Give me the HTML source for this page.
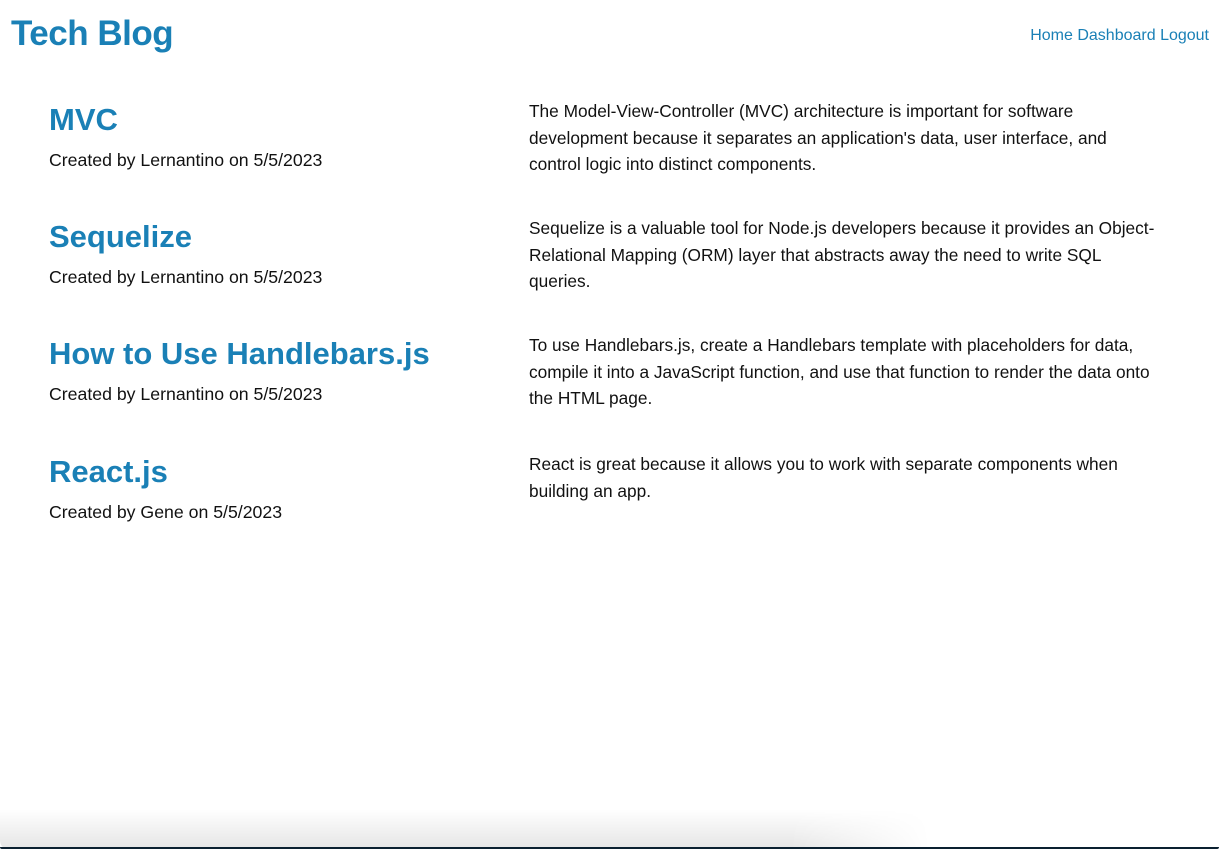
<!DOCTYPE html>
<html><head><style>
body{margin:0;width:1219px;height:849px;background:#fff;font-family:"Liberation Sans",sans-serif;position:relative;overflow:hidden;color:#111}
.logo{position:absolute;left:11px;top:14px;font-size:35px;font-weight:bold;color:#1a80b6;letter-spacing:-0.5px}
.nav{position:absolute;right:10px;top:27px;font-size:16px;color:#1a80b6}
.t{position:absolute;left:49px;font-size:31px;font-weight:bold;color:#1a80b6;line-height:36px}
.d{position:absolute;left:49px;font-size:17.7px;line-height:22px}
.b{position:absolute;left:529px;width:680px;font-size:17.3px;line-height:26.5px;white-space:nowrap}
.shadow{position:absolute;left:0;bottom:0;width:930px;height:40px;background:linear-gradient(to bottom,rgba(0,0,0,0),rgba(0,0,0,0.1));border-bottom-left-radius:8px;-webkit-mask-image:linear-gradient(to right,#000 85%,transparent)}
.line{position:absolute;left:0;right:0;bottom:0;height:2px;background:#0a2030;border-radius:0 0 8px 8px}
</style></head><body>
<div class="logo">Tech Blog</div>
<div class="nav">Home Dashboard Logout</div>

<div class="t" style="top:102px">MVC</div>
<div class="d" style="top:149px">Created by Lernantino on 5/5/2023</div>
<div class="b" style="top:98px">The Model-View-Controller (MVC) architecture is important for software<br>development because it separates an application's data, user interface, and<br>control logic into distinct components.</div>

<div class="t" style="top:219px">Sequelize</div>
<div class="d" style="top:266px">Created by Lernantino on 5/5/2023</div>
<div class="b" style="top:215px">Sequelize is a valuable tool for Node.js developers because it provides an Object-<br>Relational Mapping (ORM) layer that abstracts away the need to write SQL<br>queries.</div>

<div class="t" style="top:336px">How to Use Handlebars.js</div>
<div class="d" style="top:383px">Created by Lernantino on 5/5/2023</div>
<div class="b" style="top:332px">To use Handlebars.js, create a Handlebars template with placeholders for data,<br>compile it into a JavaScript function, and use that function to render the data onto<br>the HTML page.</div>

<div class="t" style="top:454px">React.js</div>
<div class="d" style="top:501px">Created by Gene on 5/5/2023</div>
<div class="b" style="top:451px">React is great because it allows you to work with separate components when<br>building an app.</div>

<div class="shadow"></div>
<div class="line"></div>
</body></html>
